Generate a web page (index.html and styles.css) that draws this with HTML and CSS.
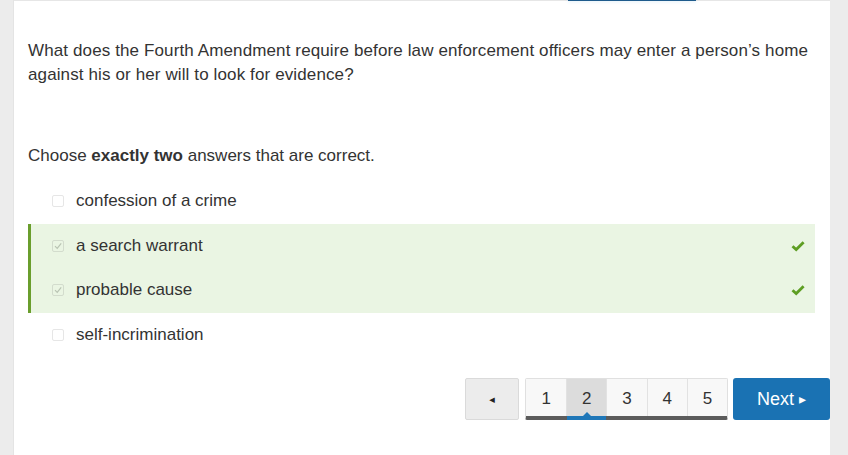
FILE: index.html
```html
<!DOCTYPE html>
<html>
<head>
<meta charset="utf-8">
<link rel="stylesheet" href="styles.css">
</head>
<body>
<div class="card">
  <div class="topstrip"><div class="topbar"></div></div>
  <div class="content">
    <p class="question">What does the Fourth Amendment require before law enforcement officers may enter a person’s home against his or her will to look for evidence?</p>
    <p class="instruction">Choose <b>exactly two</b> answers that are correct.</p>
    <ul class="options">
      <li class="option">
        <span class="box"></span>
        <span class="label">confession of a crime</span>
      </li>
      <li class="option correct">
        <span class="box checked"><svg viewBox="0 0 12 12" width="12" height="12"><path d="M3 6.2 L5.2 8.4 L9.2 3.4" fill="none" stroke="#b9c4b3" stroke-width="1.2"/></svg></span>
        <span class="label">a search warrant</span>
        <svg class="tick" viewBox="0 0 14 12" width="14" height="12"><path d="M1.5 6.2 L5.2 9.6 L12.6 2.2" fill="none" stroke="#5e9e23" stroke-width="2.8"/></svg>
      </li>
      <li class="option correct">
        <span class="box checked"><svg viewBox="0 0 12 12" width="12" height="12"><path d="M3 6.2 L5.2 8.4 L9.2 3.4" fill="none" stroke="#b9c4b3" stroke-width="1.2"/></svg></span>
        <span class="label">probable cause</span>
        <svg class="tick" viewBox="0 0 14 12" width="14" height="12"><path d="M1.5 6.2 L5.2 9.6 L12.6 2.2" fill="none" stroke="#5e9e23" stroke-width="2.8"/></svg>
      </li>
      <li class="option">
        <span class="box"></span>
        <span class="label">self-incrimination</span>
      </li>
    </ul>
  </div>
  <div class="pager">
    <button class="prev">&#9666;</button>
    <div class="pages">
      <span class="page">1</span>
      <span class="page active">2</span>
      <span class="page">3</span>
      <span class="page">4</span>
      <span class="page">5</span>
    </div>
    <button class="next">Next <span class="arr">&#9656;</span></button>
  </div>
</div>
</body>
</html>
```
FILE: styles.css
```css
html, body {
  margin: 0;
  padding: 0;
}
body {
  background: #ececec;
  font-family: "Liberation Sans", Arial, sans-serif;
  color: #333;
  height: 455px;
  overflow: hidden;
}
.card {
  margin-left: 13px;
  width: 817px;
  height: 455px;
  background: #fff;
  border-left: 1px solid #e4e4e4;
  box-sizing: border-box;
}
.topstrip {
  height: 1px;
  background: #e6e6e6;
  display: flex;
}
.topbar {
  margin-left: 554px;
  width: 128px;
  height: 1px;
  background: #1f5b8c;
  box-shadow: 0 1px 3px rgba(120, 190, 230, 0.35);
}
.content {
  padding: 38px 15px 0 14px;
}
.question {
  margin: 0;
  font-size: 17px;
  line-height: 24px;
  letter-spacing: 0.12px;
}
.instruction {
  margin: 57px 0 0 0;
  font-size: 17px;
  line-height: 24px;
}
.options {
  list-style: none;
  margin: 11px 0 0 0;
  padding: 0;
}
.option {
  display: flex;
  align-items: center;
  height: 44.5px;
  font-size: 17px;
  padding-left: 21px;
  border-left: 3px solid transparent;
  box-sizing: border-box;
}
.option.correct {
  background: #eaf5e3;
  border-left-color: #6a9e2d;
}
.box {
  width: 12px;
  height: 12px;
  border: 1px solid #e6e6e6;
  border-radius: 2px;
  box-sizing: border-box;
  display: flex;
  align-items: center;
  justify-content: center;
  margin-right: 12px;
  background: #fff;
}
.box.checked {
  background: transparent;
  border-color: #d3dccd;
}
.box svg {
  flex: none;
}
.label {
  flex: 1;
}
.tick {
  margin-right: 10px;
}
.pager {
  display: flex;
  justify-content: flex-end;
  gap: 6px;
  margin-top: 21px;
}
.prev {
  width: 54px;
  height: 42px;
  background: #ececec;
  border: 1px solid #dadada;
  border-radius: 2px;
  color: #222;
  font-size: 11px;
  padding: 0;
  font-family: "DejaVu Sans", sans-serif;
}
.pages {
  display: flex;
  height: 42px;
  border: 1px solid #e0e0e0;
  border-bottom: 4px solid #5c5c5c;
  border-radius: 2px;
  box-sizing: border-box;
}
.page {
  width: 40.2px;
  display: flex;
  align-items: center;
  justify-content: center;
  font-size: 17px;
  color: #333;
  background: #f8f8f8;
  border-left: 1px solid #e2e2e2;
  position: relative;
  padding-top: 2px;
  box-sizing: border-box;
}
.page:first-child {
  border-left: none;
}
.page.active {
  background: #dcdcdc;
}
.page.active::after {
  content: "";
  position: absolute;
  left: 0;
  right: 0;
  bottom: -4px;
  height: 4px;
  background: #1f77b8;
}
.page.active::before {
  content: "";
  position: absolute;
  left: 50%;
  bottom: 0;
  margin-left: -4px;
  border-left: 4px solid transparent;
  border-right: 4px solid transparent;
  border-bottom: 4px solid #1f77b8;
}
.next {
  width: 97px;
  height: 42px;
  background: #1a72b3;
  border: none;
  border-radius: 3px;
  color: #fff;
  font-size: 18px;
  font-family: "Liberation Sans", Arial, sans-serif;
  padding: 0;
  margin-left: -1px;
}
.arr {
  font-size: 14px;
  font-family: "DejaVu Sans", sans-serif;
  vertical-align: 1px;
}
```
